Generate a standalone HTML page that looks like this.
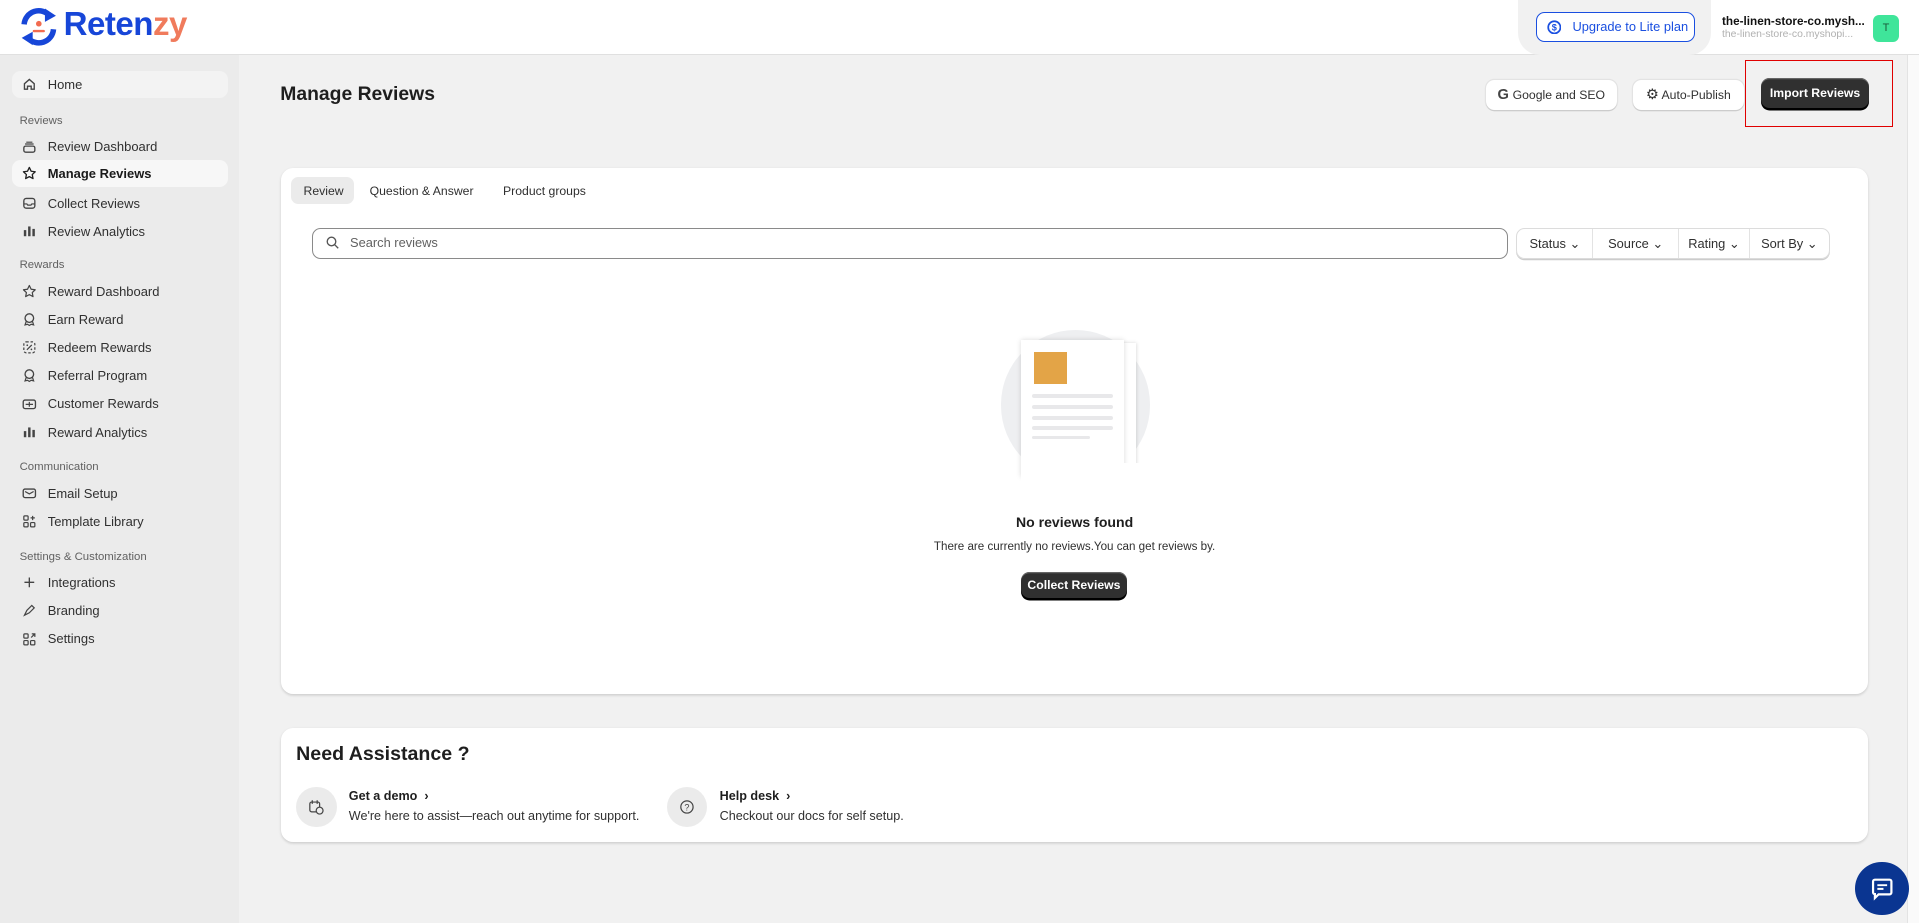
<!DOCTYPE html>
<html><head><meta charset="utf-8"><style>
*{box-sizing:border-box;margin:0;padding:0}
html,body{width:1919px;height:923px;overflow:hidden;background:#f1f1f1}
body{font-family:"Liberation Sans",sans-serif;color:#303030}
#p{zoom:1.2239;width:1568px;height:754px;position:relative;background:#f1f1f1;overflow:hidden}
.a{position:absolute}
.hdr{left:0;top:0;width:1568px;height:45px;background:#fff;border-bottom:1px solid #e0e0e0}
.side{left:0;top:45px;width:195px;height:709px;background:#ebebeb}
.nav{position:absolute;left:10px;width:176px;height:22px;display:flex;align-items:center;font-size:10.6px;color:#303030;border-radius:7px}
.nav svg{position:absolute;left:8px;width:12px;height:12px}
.nav span{position:absolute;left:29px}
.sec{position:absolute;left:16px;font-size:9.3px;color:#616161}
.card{background:#fff;border-radius:10px;box-shadow:0 1px 2px rgba(0,0,0,.15)}
.btn{position:absolute;height:25px;background:#fff;border-radius:7px;box-shadow:0 1px 0 #ccc,0 0 0 1px #e3e3e3;font-size:10px;display:flex;align-items:center;justify-content:center;color:#303030}
.dark{background:#303030;color:#fff;font-weight:bold;box-shadow:0 2px 0 #000,inset 0 1px 0 #666;border-radius:7px}
</style></head><body><div id="p">
<div class="a hdr"></div>
<svg class="a" style="left:15px;top:5px" width="34" height="34" viewBox="0 0 34 34">
<path d="M5 15 A12 12 0 0 1 26 8" fill="none" stroke="#1746d8" stroke-width="4.5"/>
<path d="M29 19 A12 12 0 0 1 8 26" fill="none" stroke="#1746d8" stroke-width="4.5"/>
<path d="M22 2 L31 8 L22 13Z" fill="#1746d8"/><path d="M12 21 L3 26 L12 32Z" fill="#1746d8"/>
<circle cx="17" cy="14.5" r="2.3" fill="#f26b4f"/><rect x="12" y="19.5" width="10" height="2" rx="1" fill="#f26b4f"/>
</svg>
<div class="a" style="left:52px;top:5px;font-size:27px;font-weight:bold;color:#1746d8;letter-spacing:-.4px">Reten<span style="color:#f07b5c">zy</span></div>
<div class="a" style="left:1240px;top:0;width:158px;height:45px;background:#f1f1f1;border-radius:0 0 18px 18px"></div>
<div class="a" style="left:1255px;top:10px;width:130px;height:24px;border:1.5px solid #1a4fe0;border-radius:7px;background:#fff;color:#1a4fe0;font-size:10.5px;display:flex;align-items:center;padding-left:8px">
<svg width="12" height="12" viewBox="0 0 12 12"><circle cx="6" cy="6" r="5" fill="none" stroke="#1a4fe0" stroke-width="1.4"/><text x="6" y="8.6" font-size="7.5" text-anchor="middle" fill="#1a4fe0" font-weight="bold" font-family="Liberation Sans">$</text></svg>
<span style="margin-left:9px">Upgrade to Lite plan</span></div>
<div class="a" style="left:1407px;top:12px;font-size:9.6px;font-weight:bold;color:#111">the-linen-store-co.mysh...</div>
<div class="a" style="left:1407px;top:24px;font-size:8.5px;color:#b0b0b0">the-linen-store-co.myshopi...</div>
<div class="a" style="left:1530px;top:12px;width:22px;height:22px;border-radius:5px;background:#3fe59a;font-size:9px;color:#1a5c3a;display:flex;align-items:center;justify-content:center">T</div>
<div class="a" style="left:1558px;top:45px;width:10px;height:709px;background:#fafafa;border-left:1px solid #e3e3e3"></div>

<div class="a side"></div>
<div class="nav" style="top:58px;background:#f3f3f3"><svg viewBox="0 0 12 12"><path d="M2 10V5.5L6 2l4 3.5V10H7.5V7.5h-3V10Z" fill="none" stroke="#444" stroke-width="1.1"/></svg><span>Home</span></div>
<div class="sec" style="top:94px">Reviews</div>
<div class="nav" style="top:109px"><svg viewBox="0 0 12 12"><rect x="1.5" y="5" width="9" height="5" rx="1.5" fill="none" stroke="#444" stroke-width="1.1"/><path d="M2.5 3.3h7M3.5 1.8h5" stroke="#444" stroke-width="1"/></svg><span>Review Dashboard</span></div>
<div class="nav" style="top:131px;background:#f7f7f7;font-weight:bold;color:#1a1a1a"><svg viewBox="0 0 12 12"><path d="M6 1.2l1.5 3.1 3.3.4-2.4 2.3.6 3.3L6 8.7 3 10.3l.6-3.3L1.2 4.7l3.3-.4Z" fill="none" stroke="#222" stroke-width="1.1" stroke-linejoin="round"/></svg><span>Manage Reviews</span></div>
<div class="nav" style="top:155px"><svg viewBox="0 0 12 12"><rect x="1.5" y="2" width="9" height="8" rx="2" fill="none" stroke="#444" stroke-width="1.1"/><path d="M1.5 6.5h2.5l.7 1h2.6l.7-1h2.5" fill="none" stroke="#444" stroke-width="1"/></svg><span>Collect Reviews</span></div>
<div class="nav" style="top:178px"><svg viewBox="0 0 12 12"><rect x="1.5" y="5" width="2" height="5" fill="#444"/><rect x="5" y="2" width="2" height="8" fill="#444"/><rect x="8.5" y="4" width="2" height="6" fill="#444"/></svg><span>Review Analytics</span></div>
<div class="sec" style="top:212px">Rewards</div>
<div class="nav" style="top:227px"><svg viewBox="0 0 12 12"><path d="M6 1.2l1.5 3.1 3.3.4-2.4 2.3.6 3.3L6 8.7 3 10.3l.6-3.3L1.2 4.7l3.3-.4Z" fill="none" stroke="#444" stroke-width="1" stroke-linejoin="round"/></svg><span>Reward Dashboard</span></div>
<div class="nav" style="top:250px"><svg viewBox="0 0 12 12"><circle cx="6" cy="5" r="3.5" fill="none" stroke="#444" stroke-width="1.1"/><path d="M3.5 7.5L2.5 10.5l2-.5 1.5 1 1.5-1 2 .5-1-3" fill="none" stroke="#444" stroke-width="1"/></svg><span>Earn Reward</span></div>
<div class="nav" style="top:273px"><svg viewBox="0 0 12 12"><rect x="1.5" y="1.5" width="9" height="9" rx="2" fill="none" stroke="#444" stroke-width="1" stroke-dasharray="2 1.5"/><path d="M4 8l4-4" stroke="#444"/><circle cx="4.3" cy="4.3" r=".7" fill="#444"/><circle cx="7.7" cy="7.7" r=".7" fill="#444"/></svg><span>Redeem Rewards</span></div>
<div class="nav" style="top:296px"><svg viewBox="0 0 12 12"><circle cx="6" cy="5" r="3.5" fill="none" stroke="#444" stroke-width="1.1"/><path d="M3.5 7.5L2.5 10.5l2-.5 1.5 1 1.5-1 2 .5-1-3" fill="none" stroke="#444" stroke-width="1"/></svg><span>Referral Program</span></div>
<div class="nav" style="top:319px"><svg viewBox="0 0 12 12"><rect x="1" y="2.5" width="10" height="7" rx="1.5" fill="none" stroke="#444" stroke-width="1.1"/><path d="M3 6h6M6 4v4" stroke="#444"/></svg><span>Customer Rewards</span></div>
<div class="nav" style="top:342px"><svg viewBox="0 0 12 12"><rect x="1.5" y="5" width="2" height="5" fill="#444"/><rect x="5" y="2" width="2" height="8" fill="#444"/><rect x="8.5" y="4" width="2" height="6" fill="#444"/></svg><span>Reward Analytics</span></div>
<div class="sec" style="top:377px">Communication</div>
<div class="nav" style="top:392px"><svg viewBox="0 0 12 12"><rect x="1" y="2.5" width="10" height="7" rx="1.5" fill="none" stroke="#444" stroke-width="1.1"/><path d="M2.5 4.5L6 6.5l3.5-2" fill="none" stroke="#444"/></svg><span>Email Setup</span></div>
<div class="nav" style="top:415px"><svg viewBox="0 0 12 12"><rect x="1.5" y="1.5" width="3.5" height="3.5" rx=".8" fill="none" stroke="#444"/><rect x="1.5" y="7" width="3.5" height="3.5" rx=".8" fill="none" stroke="#444"/><rect x="7" y="7" width="3.5" height="3.5" rx=".8" fill="none" stroke="#444"/><path d="M8.7 1.5v3.5M7 3.2h3.5" stroke="#444"/></svg><span>Template Library</span></div>
<div class="sec" style="top:450px">Settings &amp; Customization</div>
<div class="nav" style="top:465px"><svg viewBox="0 0 12 12"><path d="M6 2v8M2 6h8" stroke="#444" stroke-width="1.1"/></svg><span>Integrations</span></div>
<div class="nav" style="top:488px"><svg viewBox="0 0 12 12"><path d="M2 10l2-4 4-4 2 2-4 4Z" fill="none" stroke="#444" stroke-width="1"/></svg><span>Branding</span></div>
<div class="nav" style="top:511px"><svg viewBox="0 0 12 12"><rect x="1.5" y="1.5" width="3.5" height="3.5" rx=".8" fill="none" stroke="#444"/><rect x="1.5" y="7" width="3.5" height="3.5" rx=".8" fill="none" stroke="#444"/><rect x="7" y="7" width="3.5" height="3.5" rx=".8" fill="none" stroke="#444"/><path d="M7.5 4.5l3-3M8 1.5h2.5V4" fill="none" stroke="#444"/></svg><span>Settings</span></div>

<div class="a" style="left:229px;top:69px;font-size:15.8px;font-weight:bold;color:#1e1e1e">Manage Reviews</div>
<div class="btn" style="left:1214px;top:65px;width:107px"><b style="font-size:12px;margin-right:3px;color:#444">G</b>Google and SEO</div>
<div class="btn" style="left:1334px;top:65px;width:91px"><span style="font-size:12px;margin-right:2px">⚙</span>Auto-Publish</div>
<div class="btn dark" style="left:1439px;top:64px;width:88px;height:24px">Import Reviews</div>
<div class="a" style="left:1426px;top:49px;width:121px;height:55px;border:1.5px solid #e00000"></div>

<div class="a card" style="left:230px;top:137px;width:1296px;height:430px"></div>
<div class="a" style="left:238px;top:145px;width:51px;height:22px;background:#ebebeb;border-radius:6px"></div>
<div class="a" style="left:248px;top:150px;font-size:10px;color:#303030">Review</div>
<div class="a" style="left:302px;top:150px;font-size:10px;color:#303030">Question &amp; Answer</div>
<div class="a" style="left:411px;top:150px;font-size:10px;color:#303030">Product groups</div>
<div class="a" style="left:255px;top:186px;width:977px;height:26px;border:1px solid #8a8a8a;border-radius:7px"></div>
<svg class="a" style="left:266px;top:193px" width="11" height="11" viewBox="0 0 11 11"><circle cx="4.5" cy="4.5" r="3.5" fill="none" stroke="#555" stroke-width="1.1"/><path d="M7 7l3 3" stroke="#555" stroke-width="1.1"/></svg>
<div class="a" style="left:286px;top:192px;font-size:10.5px;color:#616161">Search reviews</div>
<div class="a" style="left:1239px;top:186px;width:256px;height:26px;border:1px solid #dcdcdc;border-radius:7px;box-shadow:0 1px 0 #ccc;display:flex;font-size:10.5px;color:#303030">
<div style="width:62px;border-right:1px solid #e3e3e3;display:flex;align-items:center;justify-content:center">Status ⌄</div>
<div style="width:70px;border-right:1px solid #e3e3e3;display:flex;align-items:center;justify-content:center">Source ⌄</div>
<div style="width:58px;border-right:1px solid #e3e3e3;display:flex;align-items:center;justify-content:center">Rating ⌄</div>
<div style="flex:1;display:flex;align-items:center;justify-content:center">Sort By ⌄</div></div>

<div class="a" style="left:818px;top:270px;width:122px;height:122px;border-radius:50%;background:#eeeff1"></div>
<div class="a" style="left:842px;top:280px;width:86px;height:110px;background:#fff;box-shadow:1px 0 3px rgba(0,0,0,.15)"></div>
<div class="a" style="left:834px;top:278px;width:84px;height:112px;background:#fff;box-shadow:0 0 4px rgba(0,0,0,.15)"></div>
<div class="a" style="left:834px;top:378px;width:100px;height:20px;background:#fff"></div>
<div class="a" style="left:845px;top:288px;width:27px;height:26px;background:#e3a447"></div>
<div class="a" style="left:843px;top:322px;width:66px;height:3px;background:#e8e8ea;border-radius:2px"></div>
<div class="a" style="left:843px;top:331px;width:66px;height:3px;background:#e8e8ea;border-radius:2px"></div>
<div class="a" style="left:843px;top:340px;width:66px;height:3px;background:#e8e8ea;border-radius:2px"></div>
<div class="a" style="left:843px;top:348px;width:66px;height:3px;background:#e8e8ea;border-radius:2px"></div>
<div class="a" style="left:843px;top:356px;width:48px;height:3px;background:#e8e8ea;border-radius:2px"></div>
<div class="a" style="left:680px;top:420px;width:396px;text-align:center;font-size:11.5px;font-weight:bold;color:#1e1e1e">No reviews found</div>
<div class="a" style="left:680px;top:441px;width:396px;text-align:center;font-size:9.5px;color:#303030">There are currently no reviews.You can get reviews by.</div>
<div class="btn dark" style="left:834px;top:467px;width:87px;height:22px;font-size:10px">Collect Reviews</div>

<div class="a card" style="left:230px;top:595px;width:1296px;height:93px"></div>
<div class="a" style="left:242px;top:607px;font-size:16px;font-weight:bold;color:#1e1e1e">Need Assistance ?</div>
<div class="a" style="left:242px;top:643px;width:33px;height:33px;border-radius:50%;background:#ebebeb"></div>
<svg class="a" style="left:252px;top:653px" width="13" height="13" viewBox="0 0 13 13"><rect x="1.5" y="2.5" width="8" height="8" rx="1.5" fill="none" stroke="#444"/><path d="M3.5 1v3M7.5 1v3" stroke="#444"/><circle cx="9.5" cy="9.5" r="2.8" fill="#ebebeb" stroke="#444"/></svg>
<div class="a" style="left:285px;top:645px;font-size:10.3px;font-weight:bold;color:#1e1e1e">Get a demo &nbsp;›</div>
<div class="a" style="left:285px;top:661px;font-size:10.3px;color:#303030">We're here to assist—reach out anytime for support.</div>
<div class="a" style="left:545px;top:643px;width:33px;height:33px;border-radius:50%;background:#ebebeb"></div>
<svg class="a" style="left:555px;top:653px" width="13" height="13" viewBox="0 0 13 13"><circle cx="6.5" cy="6.5" r="5" fill="none" stroke="#444"/><text x="6.5" y="9.3" font-size="7.5" text-anchor="middle" fill="#444" font-family="Liberation Sans">?</text></svg>
<div class="a" style="left:588px;top:645px;font-size:10.3px;font-weight:bold;color:#1e1e1e">Help desk &nbsp;›</div>
<div class="a" style="left:588px;top:661px;font-size:10.3px;color:#303030">Checkout our docs for self setup.</div>

<div class="a" style="left:1516px;top:704px;width:44px;height:44px;border-radius:50%;background:#0a3591"></div>
<svg class="a" style="left:1528px;top:716px" width="20" height="20" viewBox="0 0 20 20"><path d="M4 3h12a1.5 1.5 0 0 1 1.5 1.5v9A1.5 1.5 0 0 1 16 15H7l-3 3v-3.2A1.5 1.5 0 0 1 2.5 13.5v-9A1.5 1.5 0 0 1 4 3Z" fill="none" stroke="#fff" stroke-width="1.8"/><path d="M6 7.5h8M6 10.5h5" stroke="#fff" stroke-width="1.6"/></svg>
</div></body></html>
